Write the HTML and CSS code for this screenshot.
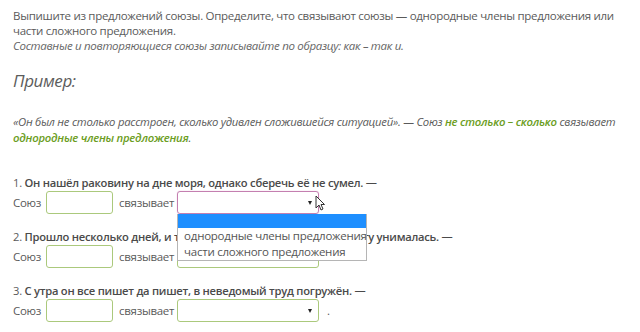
FILE: index.html
```html
<!DOCTYPE html>
<html lang="ru">

<head>
    <meta charset="utf-8">
    <meta name="viewport" content="width=device-width, initial-scale=1.0">
    <title>Союзы</title>
    <link rel="stylesheet" href="styles.css">
</head>

<body>

    <main class="opgave">
        <p class="instruks">
            Выпишите из предложений союзы. Определите, что связывают союзы — однородные члены предложения или
            части сложного предложения.<br>
            <em>Составные и повторяющиеся союзы записывайте по образцу: как – так и.</em>
        </p>

        <h2 class="primer">Пример:</h2>

        <p class="eksempel">
            «Он был не столько расстроен, сколько удивлен сложившейся ситуацией». — Союз
            <b>не столько – сколько</b> связывает <b>однородные члены предложения</b>.
        </p>

        <section class="sporgsmaal">
            <p class="tekst">1. <b>Он нашёл раковину на дне моря, однако сберечь её не сумел. —</b></p>
            <div class="svar">
                <span>Союз</span>
                <input class="felt" type="text">
                <span>связывает</span>
                <div class="valg aktiv">
                    <div class="boks"></div>
                    <svg class="mus" width="10" height="16" viewBox="0 0 10 16">
                        <path d="M1 1 L1 13 L4 10 L6 15 L8 14 L6 9.5 L9.5 9.5 Z" fill="#fff" stroke="#333" stroke-width="1"/>
                    </svg>
                    <ul class="liste">
                        <li class="markeret"></li>
                        <li>однородные члены предложения</li>
                        <li>части сложного предложения</li>
                    </ul>
                </div>
            </div>
        </section>

        <section class="sporgsmaal">
            <p class="tekst">2. <b>Прошло несколько дней, и тяжёлая, душевная тоска понемногу унималась. —</b></p>
            <div class="svar">
                <span>Союз</span>
                <input class="felt" type="text">
                <span>связывает</span>
                <div class="valg">
                    <div class="boks"></div>
                </div>
            </div>
        </section>

        <section class="sporgsmaal">
            <p class="tekst">3. <b>С утра он все пишет да пишет, в неведомый труд погружён. —</b></p>
            <div class="svar">
                <span>Союз</span>
                <input class="felt" type="text">
                <span>связывает</span>
                <div class="valg">
                    <div class="boks"></div>
                </div>
                <span class="punktum">.</span>
            </div>
        </section>
    </main>

</body>

</html>
```

FILE: styles.css
```css
body {
    margin: 0;
    padding: 0;
    background-color: white;
    font-family: "Open Sans", "DejaVu Sans", sans-serif;
    color: #5a5a5a;
}

.opgave {
    padding: 8px 13px 0 13px;
}

.instruks {
    margin: 0;
    font-size: 11.5px;
    letter-spacing: -0.3px;
    line-height: 15px;
}

.instruks em {
    color: #666;
}

.primer {
    margin: 16px 0 0 0;
    font-size: 17px;
    letter-spacing: -0.4px;
    font-weight: normal;
    font-style: italic;
    color: #5c5c5c;
    line-height: 24px;
}

.eksempel {
    margin: 21px 0 0 0;
    font-size: 11.3px;
    letter-spacing: -0.25px;
    font-style: italic;
    line-height: 16px;
}

.eksempel b {
    color: #6b9d22;
    font-weight: 600;
}

/* spørgsmål */

.sporgsmaal:first-of-type {
    margin-top: 29px;
}

.sporgsmaal + .sporgsmaal {
    margin-top: 15px;
}

.tekst {
    margin: 0;
    font-size: 11.2px;
    letter-spacing: -0.25px;
    line-height: 15px;
}

.tekst b {
    font-weight: 600;
    color: #4a4a4a;
}

.svar {
    display: flex;
    align-items: center;
    gap: 6px;
    margin-top: 1px;
    font-size: 11.5px;
    letter-spacing: -0.3px;
}

.felt {
    width: 67px;
    height: 23px;
    box-sizing: border-box;
    border: 1px solid #abc97c;
    border-radius: 3px;
    margin: 0 0 0 -1px;
    padding: 0;
}

.valg {
    position: relative;
    width: 142px;
    height: 23px;
    margin-left: -3px;
}

.boks {
    width: 100%;
    height: 100%;
    box-sizing: border-box;
    border: 1px solid #abc97c;
    border-radius: 3px;
}

.valg::after {
    content: "";
    position: absolute;
    right: 7px;
    top: 10px;
    border-left: 2.5px solid transparent;
    border-right: 2.5px solid transparent;
    border-top: 4px solid #222;
}

.aktiv .boks {
    border-color: #c47fb0;
    box-shadow: 0 0 1px #d9a6c9;
}

.mus {
    position: absolute;
    left: 138px;
    top: 4px;
}

.liste {
    position: absolute;
    top: 23px;
    left: 0;
    width: 190px;
    margin: 0;
    padding: 0;
    list-style: none;
    background-color: white;
    border: 1px solid #b5b5b5;
    border-top: none;
    box-sizing: border-box;
    font-size: 11.5px;
    letter-spacing: -0.25px;
    line-height: 16px;
    color: #555;
    white-space: nowrap;
    z-index: 2;
}

.liste li {
    padding-left: 6px;
}

.liste .markeret {
    height: 14px;
    background-color: #1e8fff;
}

.punktum {
    margin-left: 2px;
}
```
